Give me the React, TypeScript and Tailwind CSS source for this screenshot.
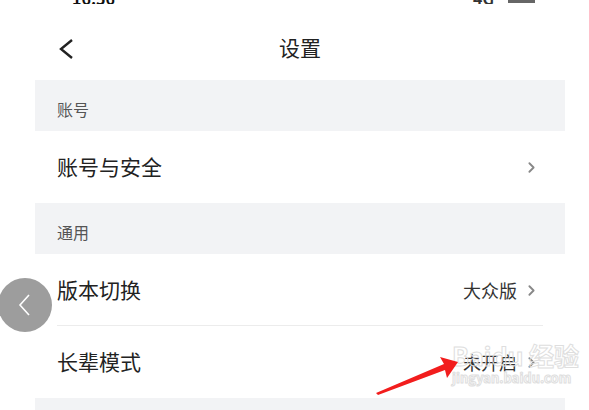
import { ChevronRight } from "lucide-react";

const font = { fontFamily: '"Noto Sans CJK SC", "Noto Sans", sans-serif' };

function SectionHeader({ title }: { title: string }) {
  return (
    <div className="h-[51px] bg-[#f2f3f5] pl-[22px] pt-[19px] text-[16px] leading-[20px] text-[#555]">
      {title}
    </div>
  );
}

function Row({ label, value, divider }: { label: string; value?: string; divider?: boolean }) {
  return (
    <div className="relative flex h-[72px] items-center pl-[22px] pr-[25px]">
      <span className="text-[21px] text-[#222]">{label}</span>
      <div className="ml-auto flex items-center gap-[6px]">
        {value && <span className="text-[18px] text-[#333]">{value}</span>}
        <ChevronRight className="h-[17px] w-[17px] text-[#888]" strokeWidth={2.6} />
      </div>
      {divider && <div className="absolute bottom-0 left-[22px] right-[22px] h-px bg-[#ececec]" />}
    </div>
  );
}

export default function App() {
  return (
    <div className="relative h-[410px] w-[589px] overflow-hidden bg-white" style={font}>
      {/* status bar, cut off at top */}
      <div className="flex h-[4px] justify-between overflow-hidden pl-[72px] pr-[54px]">
        <span className="-mt-[14px] text-[16px] font-bold text-[#111]">16:56</span>
        <span className="-mt-[14px] flex gap-[14px] text-[16px] font-bold text-[#333]">
          <span>4G</span>
          <span className="mt-[14px] h-[3px] w-[27px] bg-[#666]" />
        </span>
      </div>

      {/* nav */}
      <div className="relative ml-[35px] mr-[24px] h-[76px] pt-[30px] text-center">
        <svg className="absolute left-[23px] top-[35px]" width="16" height="20" viewBox="0 0 16 20">
          <path d="M14 1 L3 10 L14 19" fill="none" stroke="#222" strokeWidth="2.4" />
        </svg>
        <span className="text-[21px] leading-[26px] text-[#222]">设置</span>
      </div>

      <div className="ml-[35px] mr-[24px]">
        <SectionHeader title="账号" />
        <Row label="账号与安全" />
        <SectionHeader title="通用" />
        <Row label="版本切换" value="大众版" divider />
        <Row label="长辈模式" value="未开启" />
        <div className="h-[20px] bg-[#f2f3f5]" />
      </div>

      {/* floating back button */}
      <div className="absolute left-[-2px] top-[278px] flex h-[54px] w-[54px] items-center justify-center rounded-full bg-[#9d9d9d]">
        <svg width="16" height="26" viewBox="0 0 16 26">
          <path d="M12 3 L3 13 L12 23" fill="none" stroke="#fff" strokeWidth="1.6" />
        </svg>
      </div>

      {/* watermark */}
      <div className="pointer-events-none absolute left-[452px] top-[343px] leading-none text-transparent [-webkit-text-stroke:1px_#dedede]">
        <div className="text-[25px] font-bold">Baidu 经验</div>
        <div className="mt-[3px] text-[13px] font-bold">jingyan.baidu.com</div>
      </div>

      {/* red arrow */}
      <svg className="absolute left-0 top-0" width="589" height="410">
        <polygon points="376,393 444,364 440,357 458,362 447,378 445,370 378,395" fill="#f21d1d" />
      </svg>
    </div>
  );
}
